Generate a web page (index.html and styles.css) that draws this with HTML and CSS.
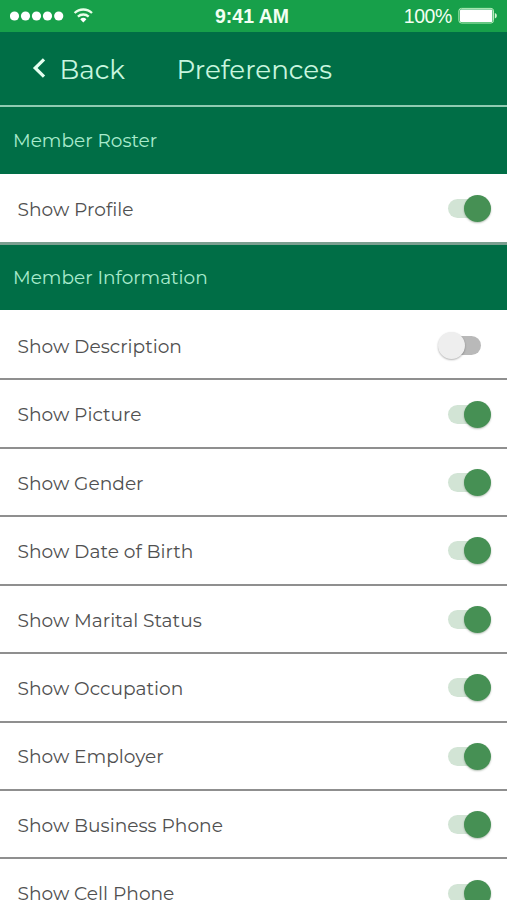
FILE: index.html
```html
<!DOCTYPE html>
<html lang="en">
<head>
<meta charset="utf-8">
<title>Preferences</title>
<link rel="stylesheet" href="styles.css">
</head>
<body>
<div class="screen">
  <div class="status">
    <div class="signal">
      <svg width="86" height="24" viewBox="0 0 86 24" fill="#fff">
        <circle cx="4.5" cy="12" r="4.6"/><circle cx="15.5" cy="12" r="4.6"/><circle cx="26.5" cy="12" r="4.6"/><circle cx="37.5" cy="12" r="4.6"/><circle cx="48.7" cy="12" r="4.6"/>
        <g fill="none" stroke="#e9ffe9" stroke-width="2.3"><path d="M64.6 9a12.6 12.6 0 0 1 17.4 0"/><path d="M67.9 12.6a8 8 0 0 1 10.8 0"/></g>
        <path d="M70.2 15.2a4.6 4.6 0 0 1 6.2 0l-3.1 3.2z"/>
      </svg>
    </div>
    <div class="time">9:41 AM</div>
    <div class="power"><span>100%</span>
      <svg width="40" height="18" viewBox="0 0 40 18"><rect x=".9" y="1.4" width="34.6" height="14.6" rx="2.5" fill="none" stroke="#b5efba" stroke-width="1"/><rect x="2" y="2.5" width="32.4" height="12.4" rx="1" fill="#fff"/><path d="M36.8 6v5.4c1.3-.4 2-1.5 2-2.7s-.7-2.3-2-2.7z" fill="#d5f5d5"/></svg>
    </div>
  </div>
  <header class="nav">
    <svg class="chevron" width="14" height="22" viewBox="0 0 14 22" fill="none" stroke="#e4fff0" stroke-width="3.2"><path d="M12 2.4 3.2 11 12 19.6"/></svg>
    <span class="back">Back</span>
    <h1>Preferences</h1>
  </header>
  <h2 class="section roster">Member Roster</h2>
  <div class="row profile"><span>Show Profile</span><i class="toggle on"></i></div>
  <h2 class="section info">Member Information</h2>
  <div class="row first"><span>Show Description</span><i class="toggle off"></i></div>
  <div class="row"><span>Show Picture</span><i class="toggle on"></i></div>
  <div class="row"><span>Show Gender</span><i class="toggle on"></i></div>
  <div class="row"><span>Show Date of Birth</span><i class="toggle on"></i></div>
  <div class="row"><span>Show Marital Status</span><i class="toggle on"></i></div>
  <div class="row"><span>Show Occupation</span><i class="toggle on"></i></div>
  <div class="row"><span>Show Employer</span><i class="toggle on"></i></div>
  <div class="row"><span>Show Business Phone</span><i class="toggle on"></i></div>
  <div class="row"><span>Show Cell Phone</span><i class="toggle on"></i></div>
</div>
</body>
</html>
```

FILE: styles.css
```css
* { box-sizing: border-box; }
body { margin: 0; background: #fff; font-family: Montserrat, Inter, sans-serif; }
.screen { width: 507px; height: 900px; overflow: hidden; }
.status { height: 32px; background: #17a04a; color: #f2fff2; display: grid; grid-template-columns: 1fr 90px 1fr; align-items: center; padding: 0 9px 0 10px; font-family: "Liberation Sans", sans-serif; font-size: 19.5px; }
.signal, .power { display: flex; align-items: center; }
.time { font-weight: bold; font-size: 19.5px; text-align: center; white-space: nowrap; margin-left: -4px; }
.power { justify-content: flex-end; gap: 6px; letter-spacing: -0.4px; }
.nav { height: 75px; background: #006e46; border-bottom: 2px solid #8fcbb2; display: flex; align-items: center; padding: 0 0 0 32px; color: #c8f5df; font-size: 26.2px; font-weight: 400; }
.chevron { margin-top: -1px; }
.back { width: 130.5px; padding: 3px 0 0 13.5px; }
.nav h1 { margin: 0; font: inherit; padding-top: 3px; }
.section { margin: 0; background: #006e46; color: #a9ebcd; font-size: 18.5px; font-weight: 400; display: flex; align-items: center; padding: 0 13px; }
.roster { height: 67px; }
.info { height: 65px; }
.row { height: 68.43px; border-bottom: 2px solid #8f8f8f; background: #fff; display: flex; align-items: center; justify-content: space-between; padding: 2px 16px 0 17.5px; color: #505050; font-size: 18.6px; }
.row span { padding-top: 0.3px; }
.row.profile { height: 71px; border-bottom: 3px solid #7b9f90; padding-top: 2px; }
.row.first { height: 70.4px; padding-top: 4px; }
.toggle { width: 43px; height: 27px; display: block; position: relative; margin-top: -1px; }
.toggle::before { content: ""; position: absolute; left: 0; top: 4px; width: 33px; height: 19px; border-radius: 10px; background: #d2e4d5; }
.toggle::after { content: ""; position: absolute; right: 0; top: 0; width: 27px; height: 27px; border-radius: 50%; background: #469054; box-shadow: 0 1px 2px rgba(0,40,0,.3); }
.toggle.off { margin-right: 10px; }
.toggle.off::before { left: 10px; background: #b9b9b9; }
.toggle.off::after { right: auto; left: 0; background: #eee; box-shadow: 0 1px 2px rgba(0,0,0,.3); }
```
